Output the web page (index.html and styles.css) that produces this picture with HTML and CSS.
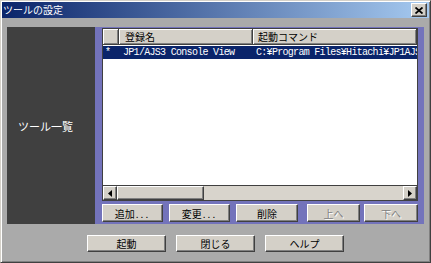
FILE: index.html
```html
<!DOCTYPE html>
<html lang="ja">
<head>
    <meta charset="UTF-8">
    <title>ツールの設定</title>
    <link rel="stylesheet" href="styles.css">
</head>
<body>
    <div class="window">
        <div class="titlebar">
            <span class="title">ツールの設定</span>
            <span class="close">
                <svg width="8" height="7" viewBox="0 0 8 7"><path d="M0.5 0.5 L7.5 6.5 M7.5 0.5 L0.5 6.5" stroke="#000" stroke-width="1.8"/></svg>
            </span>
        </div>
        <div class="main">
            <div class="side">ツール一覧</div>
            <div class="pane">
                <div class="list">
                    <div class="list-head">
                        <div class="hcell mark"></div>
                        <div class="hcell name">登録名</div>
                        <div class="hcell cmd">起動コマンド</div>
                    </div>
                    <div class="rows">
                        <div class="row selected">
                            <span class="mark">*</span>
                            <span class="name">JP1/AJS3 Console View</span>
                            <span class="cmd">C:¥Program Files¥Hitachi¥JP1AJS3</span>
                        </div>
                    </div>
                    <div class="hscroll">
                        <div class="sbtn">
                            <svg width="4" height="7" viewBox="0 0 4 7"><path d="M4 0 L0 3.5 L4 7 Z" fill="#000"/></svg>
                        </div>
                        <div class="thumb"></div>
                        <div class="track"></div>
                        <div class="sbtn">
                            <svg width="4" height="7" viewBox="0 0 4 7"><path d="M0 0 L4 3.5 L0 7 Z" fill="#000"/></svg>
                        </div>
                    </div>
                </div>
                <div class="list-buttons">
                    <button class="btn w61">追加<span class="dots">...</span></button>
                    <button class="btn w61 gap6">変更<span class="dots">...</span></button>
                    <button class="btn w62 gap6">削除</button>
                    <button class="btn w53 gap9" disabled>上へ</button>
                    <button class="btn w54 gap4" disabled>下へ</button>
                </div>
            </div>
        </div>
        <div class="dialog-buttons">
            <button class="btn big">起動</button>
            <button class="btn big">閉じる</button>
            <button class="btn big">ヘルプ</button>
        </div>
    </div>
</body>
</html>
```

FILE: styles.css
```css
/* Page */
body {
    margin: 0;
    font-family: "Noto Sans CJK JP", "Liberation Sans", sans-serif;
    font-size: 10px;
    background: #aaaaaa;
}

/* Dialog frame */
.window {
    width: 431px;
    height: 263px;
    box-sizing: border-box;
    padding: 1px;
    border: 1px solid;
    border-color: #d4d0c8 #404040 #404040 #d4d0c8;
    box-shadow: inset 1px 1px #ffffff, inset -1px -1px #808080;
    background: #aaaaaa;
    overflow: hidden;
}

.titlebar {
    height: 16px;
    display: flex;
    align-items: center;
    justify-content: space-between;
    background: linear-gradient(to right, #0a246a, #a6caf0);
    color: #ffffff;
    padding: 0 2px 0 1px;
}

.title {
    font-size: 10px;
    line-height: 16px;
}

.close {
    width: 14px;
    height: 12px;
    display: flex;
    align-items: center;
    justify-content: center;
    background: #d4d0c8;
    border: 1px solid;
    border-color: #ffffff #404040 #404040 #ffffff;
    box-shadow: inset -1px -1px #808080;
}

/* Main area */
.main {
    display: flex;
    height: 197px;
    margin: 9px 5px 0 5px;
}

.side {
    width: 88px;
    flex-shrink: 0;
    background: #404040;
    color: #ffffff;
    font-size: 11px;
    display: flex;
    align-items: center;
    padding-left: 11px;
    box-sizing: border-box;
    white-space: nowrap;
}

.pane {
    flex: 1;
    min-width: 0;
    background: #7373bb;
    padding: 1px 6px 2px 7px;
    display: flex;
    flex-direction: column;
}

/* List view */
.list {
    height: 173px;
    min-width: 0;
    box-sizing: border-box;
    border: 1px solid #404040;
    background: #ffffff;
    display: flex;
    flex-direction: column;
    overflow: hidden;
}

.list-head {
    display: flex;
    height: 16px;
    flex-shrink: 0;
}

.hcell {
    box-sizing: border-box;
    background: #d4d0c8;
    border-right: 1px solid #404040;
    border-bottom: 1px solid #404040;
    box-shadow: inset 1px 1px #ffffff, inset -1px -1px #808080;
    line-height: 15px;
    padding-left: 6px;
    overflow: hidden;
    white-space: nowrap;
}

.hcell.mark { width: 16px; padding: 0; flex-shrink: 0; }
.hcell.name { width: 134px; flex-shrink: 0; }
.hcell.cmd { flex: 1; padding-left: 5px; }

.rows {
    flex: 1;
    padding-top: 1px;
    overflow: hidden;
}

.row {
    display: flex;
    height: 13px;
    line-height: 13px;
    font-family: "Liberation Mono", "Noto Sans CJK JP", monospace;
    font-size: 10px;
    letter-spacing: -0.7px;
    white-space: nowrap;
    overflow: hidden;
}

.row.selected {
    background: #0a246a;
    color: #ffffff;
}

.row .mark { width: 16px; padding-left: 2px; box-sizing: border-box; flex-shrink: 0; }
.row .name { width: 134px; padding-left: 4px; box-sizing: border-box; flex-shrink: 0; }
.row .cmd { padding-left: 3px; flex-shrink: 0; }

/* Horizontal scrollbar */
.hscroll {
    display: flex;
    height: 14px;
    flex-shrink: 0;
    border-top: 1px solid #404040;
    background: #d4d0c8;
}

.sbtn, .thumb {
    box-sizing: border-box;
    height: 14px;
    flex-shrink: 0;
    background: #d4d0c8;
    border: 1px solid;
    border-color: #ffffff #404040 #404040 #ffffff;
    box-shadow: inset -1px -1px #808080;
}

.sbtn {
    width: 14px;
    display: flex;
    align-items: center;
    justify-content: center;
}

.thumb { width: 87px; }
.track { flex: 1; background: #d8d4cc; }

/* Buttons */
.list-buttons {
    display: flex;
    margin-top: 3px;
}

.btn {
    height: 18px;
    box-sizing: border-box;
    padding: 0;
    margin: 0;
    flex-shrink: 0;
    font-family: "Noto Sans CJK JP", "Liberation Sans", sans-serif;
    font-size: 10px;
    line-height: 15px;
    color: #000000;
    background: #d4d0c8;
    border: 1px solid;
    border-color: #ffffff #404040 #404040 #ffffff;
    box-shadow: inset -1px -1px #808080;
}

.btn:disabled {
    color: #808080;
    text-shadow: 1px 1px #ffffff;
}

.dots { letter-spacing: 2px; margin-left: 1px; }

.w61 { width: 61px; }
.w62 { width: 62px; }
.w53 { width: 53px; }
.w54 { width: 54px; }
.gap4 { margin-left: 4px; }
.gap6 { margin-left: 6px; }
.gap9 { margin-left: 9px; }

.dialog-buttons {
    display: flex;
    justify-content: center;
    gap: 10px;
    margin-top: 11px;
}

.btn.big {
    width: 79px;
    height: 17px;
    line-height: 14px;
}
```
